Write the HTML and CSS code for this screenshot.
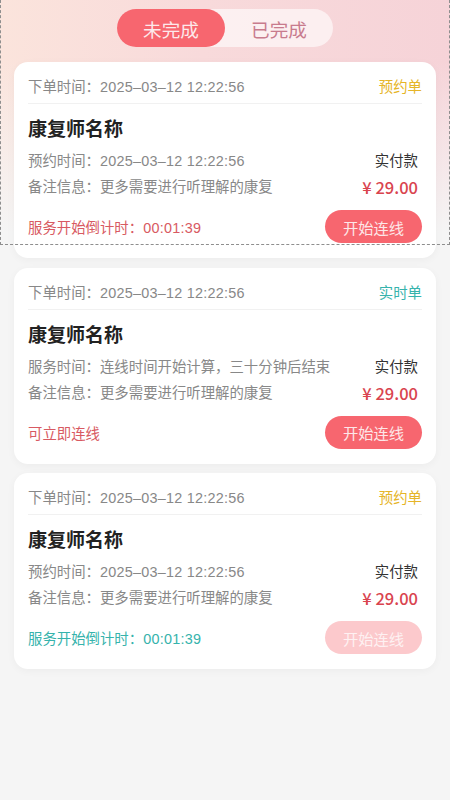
FILE: index.html
```html
<!DOCTYPE html>
<html lang="zh-CN">
<head>
<meta charset="utf-8">
<title>订单</title>
<link rel="stylesheet" href="styles.css">
</head>
<body>
<div class="page">
  <div class="hero-bg"></div>
  <div class="hero-outline"></div>
  <div class="content">
    <div class="tabs">
      <div class="tab active">未完成</div>
      <div class="tab">已完成</div>
    </div>
    <div class="list">
      <div class="card">
        <div class="card-head">
          <span class="muted">下单时间：<span class="num">2025–03–12 12:22:56</span></span>
          <span class="type gold">预约单</span>
        </div>
        <div class="name">康复师名称</div>
        <div class="row">
          <span class="muted">预约时间：<span class="num">2025–03–12 12:22:56</span></span>
          <span class="pay">实付款</span>
        </div>
        <div class="row">
          <span class="muted">备注信息：更多需要进行听理解的康复</span>
          <span class="price">¥ 29.00</span>
        </div>
        <div class="foot">
          <span class="status red">服务开始倒计时：<span class="num">00:01:39</span></span>
          <button class="btn">开始连线</button>
        </div>
      </div>
      <div class="card">
        <div class="card-head">
          <span class="muted">下单时间：<span class="num">2025–03–12 12:22:56</span></span>
          <span class="type teal">实时单</span>
        </div>
        <div class="name">康复师名称</div>
        <div class="row">
          <span class="muted">服务时间：连线时间开始计算，三十分钟后结束</span>
          <span class="pay">实付款</span>
        </div>
        <div class="row">
          <span class="muted">备注信息：更多需要进行听理解的康复</span>
          <span class="price">¥ 29.00</span>
        </div>
        <div class="foot">
          <span class="status red">可立即连线</span>
          <button class="btn">开始连线</button>
        </div>
      </div>
      <div class="card">
        <div class="card-head">
          <span class="muted">下单时间：<span class="num">2025–03–12 12:22:56</span></span>
          <span class="type gold">预约单</span>
        </div>
        <div class="name">康复师名称</div>
        <div class="row">
          <span class="muted">预约时间：<span class="num">2025–03–12 12:22:56</span></span>
          <span class="pay">实付款</span>
        </div>
        <div class="row">
          <span class="muted">备注信息：更多需要进行听理解的康复</span>
          <span class="price">¥ 29.00</span>
        </div>
        <div class="foot">
          <span class="status teal">服务开始倒计时：<span class="num">00:01:39</span></span>
          <button class="btn disabled">开始连线</button>
        </div>
      </div>
    </div>
  </div>
</div>
</body>
</html>
```
FILE: styles.css
```css
* { box-sizing: border-box; }
html, body {
  margin: 0;
  padding: 0;
  background: #f5f5f5;
  font-family: "Liberation Sans", "Noto Sans CJK SC", sans-serif;
}
.page {
  position: relative;
  width: 450px;
  min-height: 800px;
}
.hero-bg {
  position: absolute;
  top: 0;
  left: 0;
  width: 450px;
  height: 245px;
  background:
    linear-gradient(to bottom, rgba(245,245,245,0) 0%, rgba(245,245,245,0) 25%, rgba(245,245,245,1) 95%),
    linear-gradient(to right, #fbe4dc 0%, #f8dadb 45%, #f6d3d8 100%);
  z-index: 0;
}
.hero-outline {
  position: absolute;
  top: 0;
  left: 0;
  width: 450px;
  height: 245px;
  border: 1px dashed #8e8e8e;
  border-top: none;
  pointer-events: none;
  z-index: 2;
}
.content {
  position: relative;
  z-index: 1;
  padding-top: 9px;
}
.tabs {
  width: 216px;
  height: 38px;
  margin: 0 auto;
  border-radius: 19px;
  background: rgba(255, 255, 255, 0.6);
  display: flex;
}
.tab {
  width: 109px;
  height: 38px;
  border-radius: 19px;
  display: flex;
  align-items: center;
  justify-content: center;
  font-size: 18.6px;
  color: #c87b8d;
}
.tab.active {
  background: #f7666f;
  color: #fde9eb;
}
.list {
  padding: 15px 14px 0;
  display: flex;
  flex-direction: column;
  gap: 9.5px;
}
.card {
  background: #fff;
  border-radius: 14px;
  padding: 0 14px;
  height: 196px;
  box-shadow: 0 2px 8px rgba(0, 0, 0, 0.04);
}
.card-head {
  display: flex;
  justify-content: space-between;
  align-items: center;
  padding: 14px 0 5px;
  line-height: 22px;
  border-bottom: 1px solid #f1f1f1;
}
.muted {
  font-size: 14.4px;
  color: #888;
}
.num {
  letter-spacing: 0.25px;
}
.type {
  font-size: 14.4px;
}
.gold { color: #e6b528; }
.teal { color: #36b3ac; }
.red { color: #d85a62; }
.name {
  margin-top: 13px;
  line-height: 26px;
  font-size: 19px;
  font-weight: 700;
  color: #222;
}
.row {
  display: flex;
  justify-content: space-between;
  align-items: center;
  line-height: 26px;
  padding-right: 4px;
}
.name + .row { margin-top: 5px; }
.pay {
  font-size: 14.4px;
  color: #333;
}
.price {
  font-family: "Noto Sans CJK SC", sans-serif;
  font-size: 16.5px;
  font-weight: 500;
  color: #d9444f;
}
.foot {
  margin-top: 10px;
  display: flex;
  justify-content: space-between;
  align-items: center;
}
.status {
  font-size: 14.4px;
}
.btn {
  width: 97px;
  height: 33px;
  border: none;
  border-radius: 17px;
  background: #f7666f;
  color: #fde6e8;
  font-family: inherit;
  font-size: 15.3px;
  padding: 0;
}
.btn.disabled {
  background: #fcc9cc;
  color: #fef1f2;
}
```
